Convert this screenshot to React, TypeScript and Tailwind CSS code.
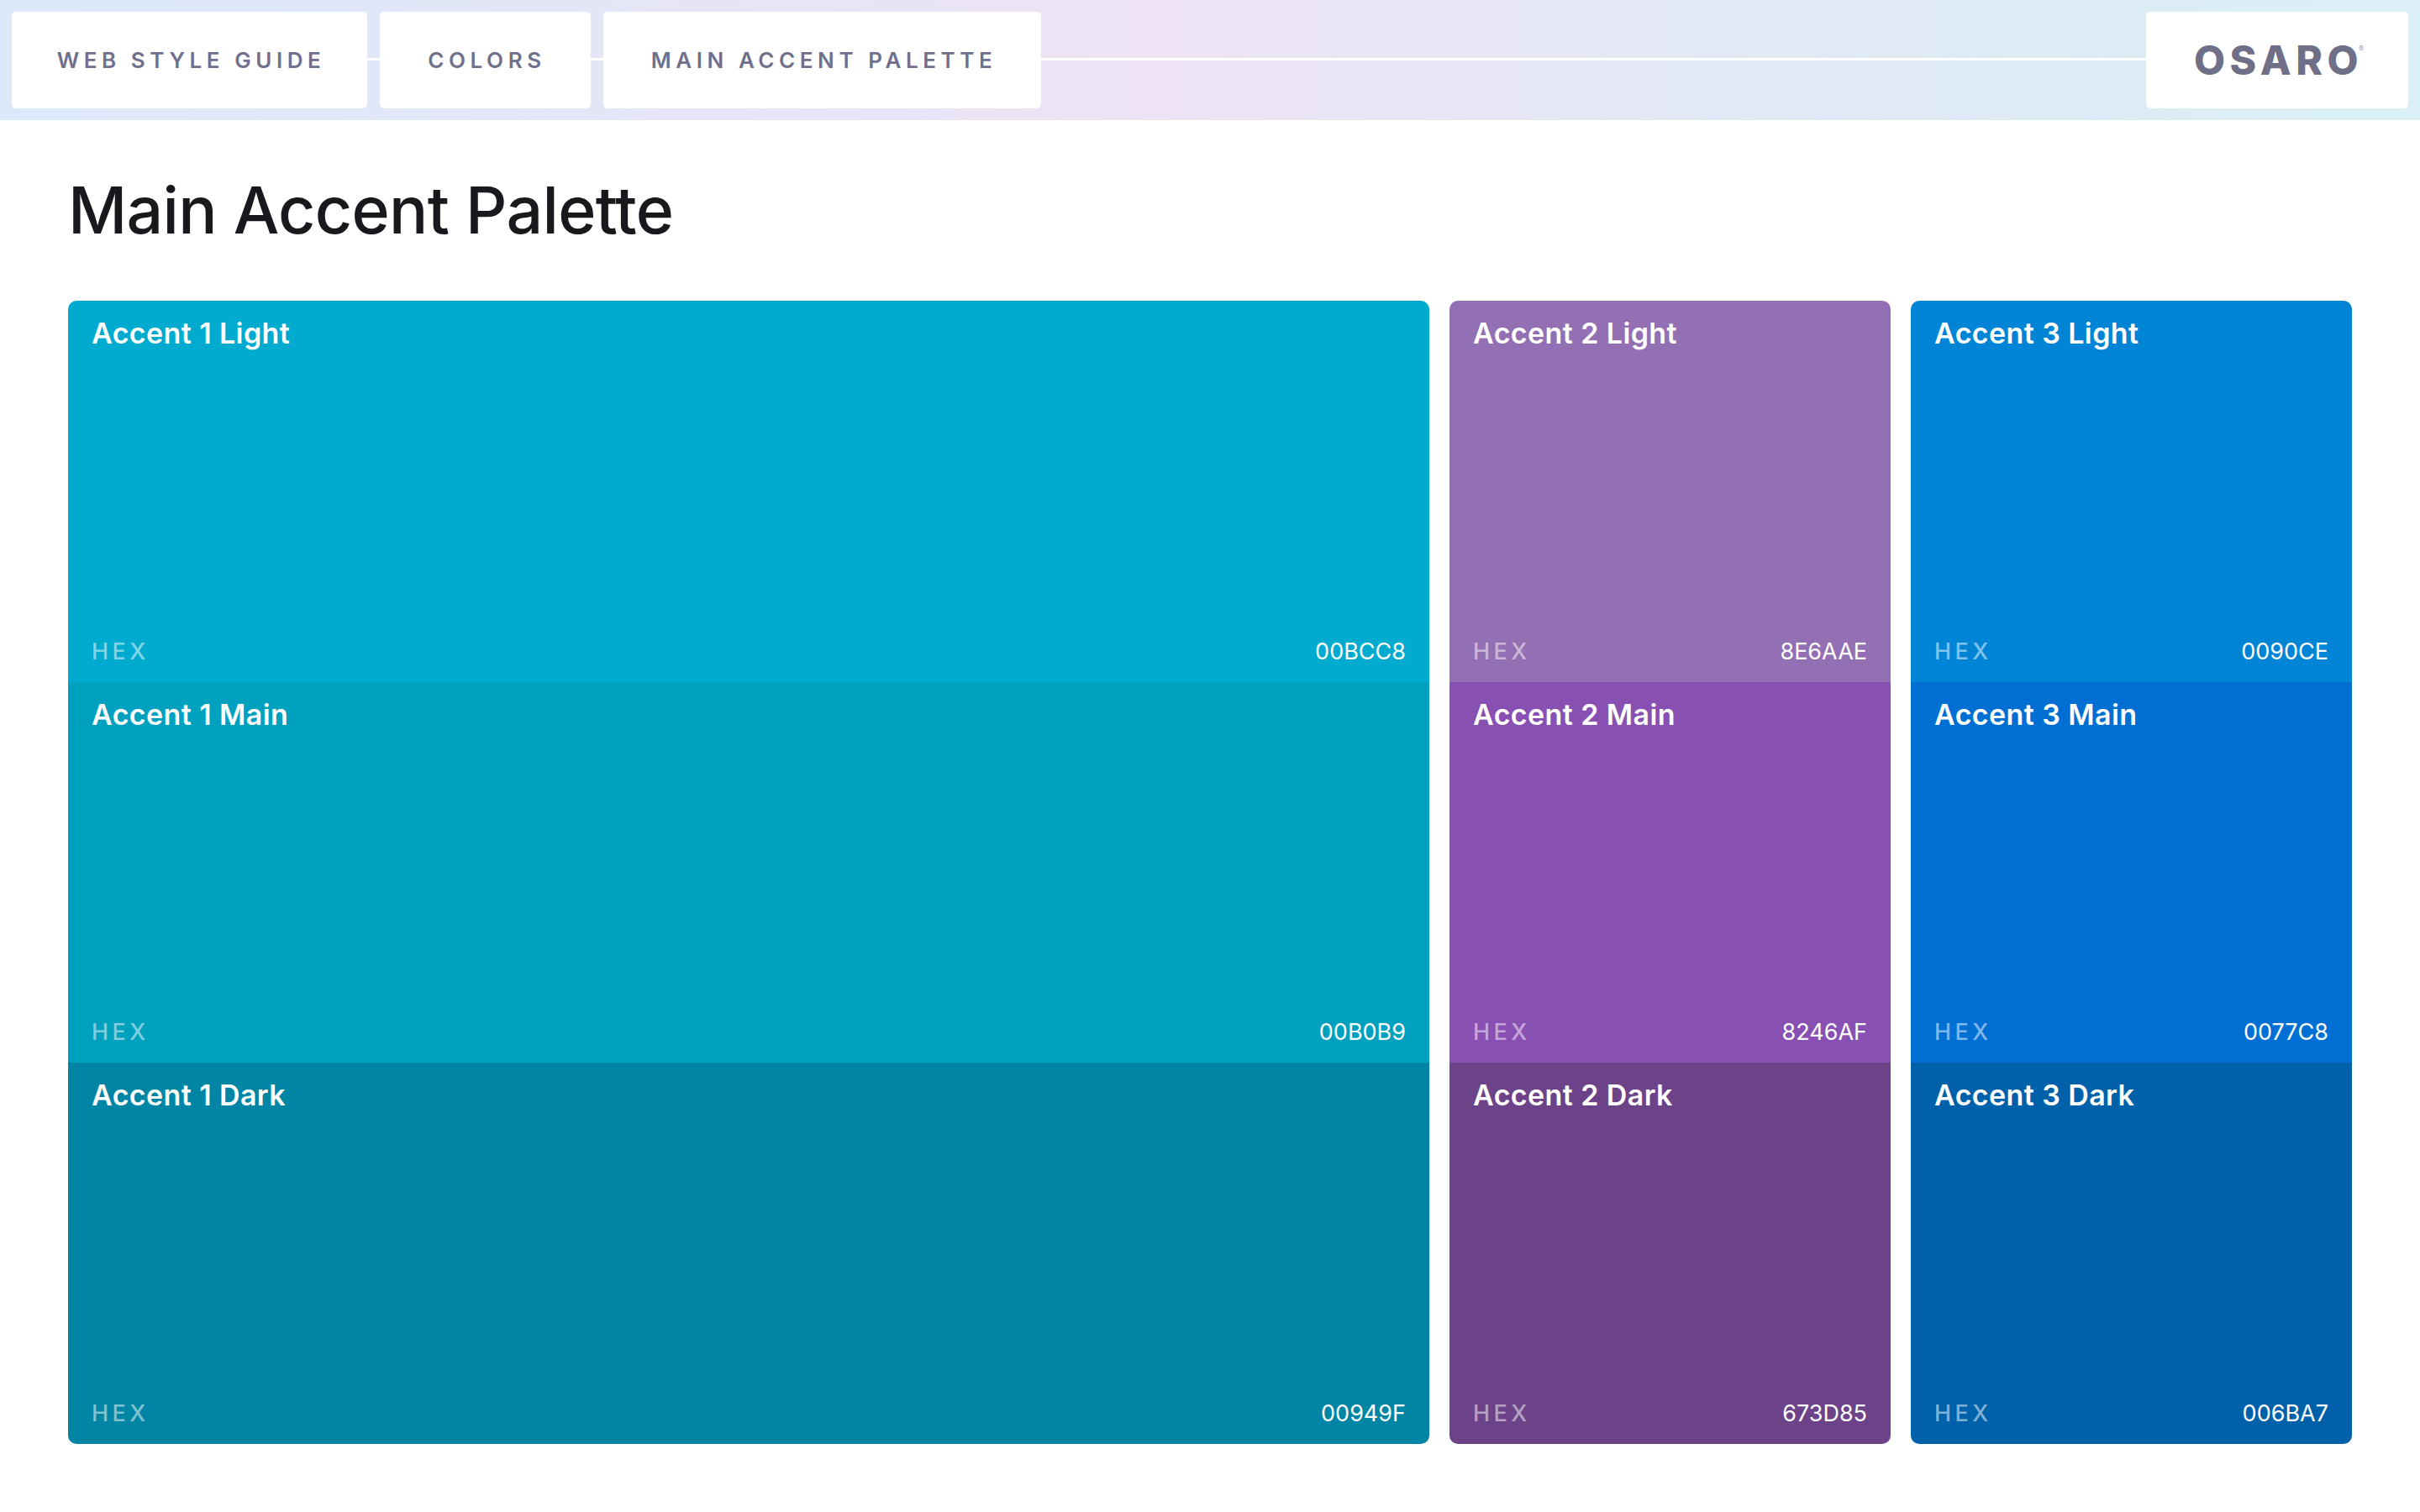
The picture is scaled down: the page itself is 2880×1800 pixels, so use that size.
const columns = [
  {
    width: "w-[1620px]",
    accent: 1,
    rows: [
      { name: "Light", hex: "00BCC8", bg: "bg-[#00abcf]" },
      { name: "Main", hex: "00B0B9", bg: "bg-[#00a0bf]" },
      { name: "Dark", hex: "00949F", bg: "bg-[#0085a5]" },
    ],
  },
  {
    width: "w-[525px]",
    accent: 2,
    rows: [
      { name: "Light", hex: "8E6AAE", bg: "bg-[#9370b3]" },
      { name: "Main", hex: "8246AF", bg: "bg-[#8950b3]" },
      { name: "Dark", hex: "673D85", bg: "bg-[#6c4388]" },
    ],
  },
  {
    width: "w-[525px]",
    accent: 3,
    rows: [
      { name: "Light", hex: "0090CE", bg: "bg-[#0085d6]" },
      { name: "Main", hex: "0077C8", bg: "bg-[#006fd3]" },
      { name: "Dark", hex: "006BA7", bg: "bg-[#0061ab]" },
    ],
  },
];

function Crumb({ label, width }: { label: string; width: string }) {
  return (
    <div
      className={`${width} h-[115px] shrink-0 flex items-center justify-center rounded-[5px] bg-white pl-[4px] text-[26px] leading-none font-semibold tracking-[0.214em] text-[#70708c]`}
    >
      <span>{label}</span>
    </div>
  );
}

function Connector({ grow }: { grow?: boolean }) {
  return <div className={grow ? "mb-[2px] h-[3px] flex-1 bg-white" : "mb-[2px] h-[3px] w-[15px] bg-white"} />;
}

export default function App() {
  return (
    <div className="h-[1800px] w-[2880px] overflow-hidden bg-white font-['Inter',sans-serif]">
      <header className="flex h-[143px] items-center bg-[linear-gradient(90deg,#dbe9fa_0%,#ede3f4_48%,#e2e9f5_72%,#dcecf5_88%,#daf0f6_100%)] px-[14px]">
        <Crumb label="WEB STYLE GUIDE" width="w-[423px]" />
        <Connector />
        <Crumb label="COLORS" width="w-[251px]" />
        <Connector />
        <Crumb label="MAIN ACCENT PALETTE" width="w-[521px]" />
        <Connector grow />
        <div className="flex h-[115px] w-[312px] shrink-0 items-center justify-center rounded-[5px] bg-white pl-[4px]">
          <span className="text-[48px] leading-none font-extrabold tracking-[0.115em] text-[#6f7088]">OSARO</span>
          <span className="mb-[28px] ml-[-5px] text-[9px] leading-none text-[#9a9aac]">®</span>
        </div>
      </header>

      <main className="px-[81px]">
        <h1 className="flex h-[215px] items-center text-[77px] leading-none font-medium tracking-[-0.009em] text-[#1a181d]">
          Main Accent Palette
        </h1>
        <div className="flex h-[1361px] gap-[24px]">
          {columns.map((col) => (
            <div key={col.accent} className={`${col.width} flex flex-col overflow-hidden rounded-[10px]`}>
              {col.rows.map((row) => (
                <div key={row.name} className={`${row.bg} flex flex-1 flex-col justify-between px-[28px] pt-[19px] pb-[19px] text-white`}>
                  <div className="text-[34px] leading-[40px] font-semibold tracking-[0.012em]">
                    Accent {col.accent} {row.name}
                  </div>
                  <div className="flex items-center justify-between text-[27px] leading-[34px]">
                    <span className="font-medium tracking-[0.165em] text-white/50">HEX</span>
                    <span>{row.hex}</span>
                  </div>
                </div>
              ))}
            </div>
          ))}
        </div>
      </main>
    </div>
  );
}
